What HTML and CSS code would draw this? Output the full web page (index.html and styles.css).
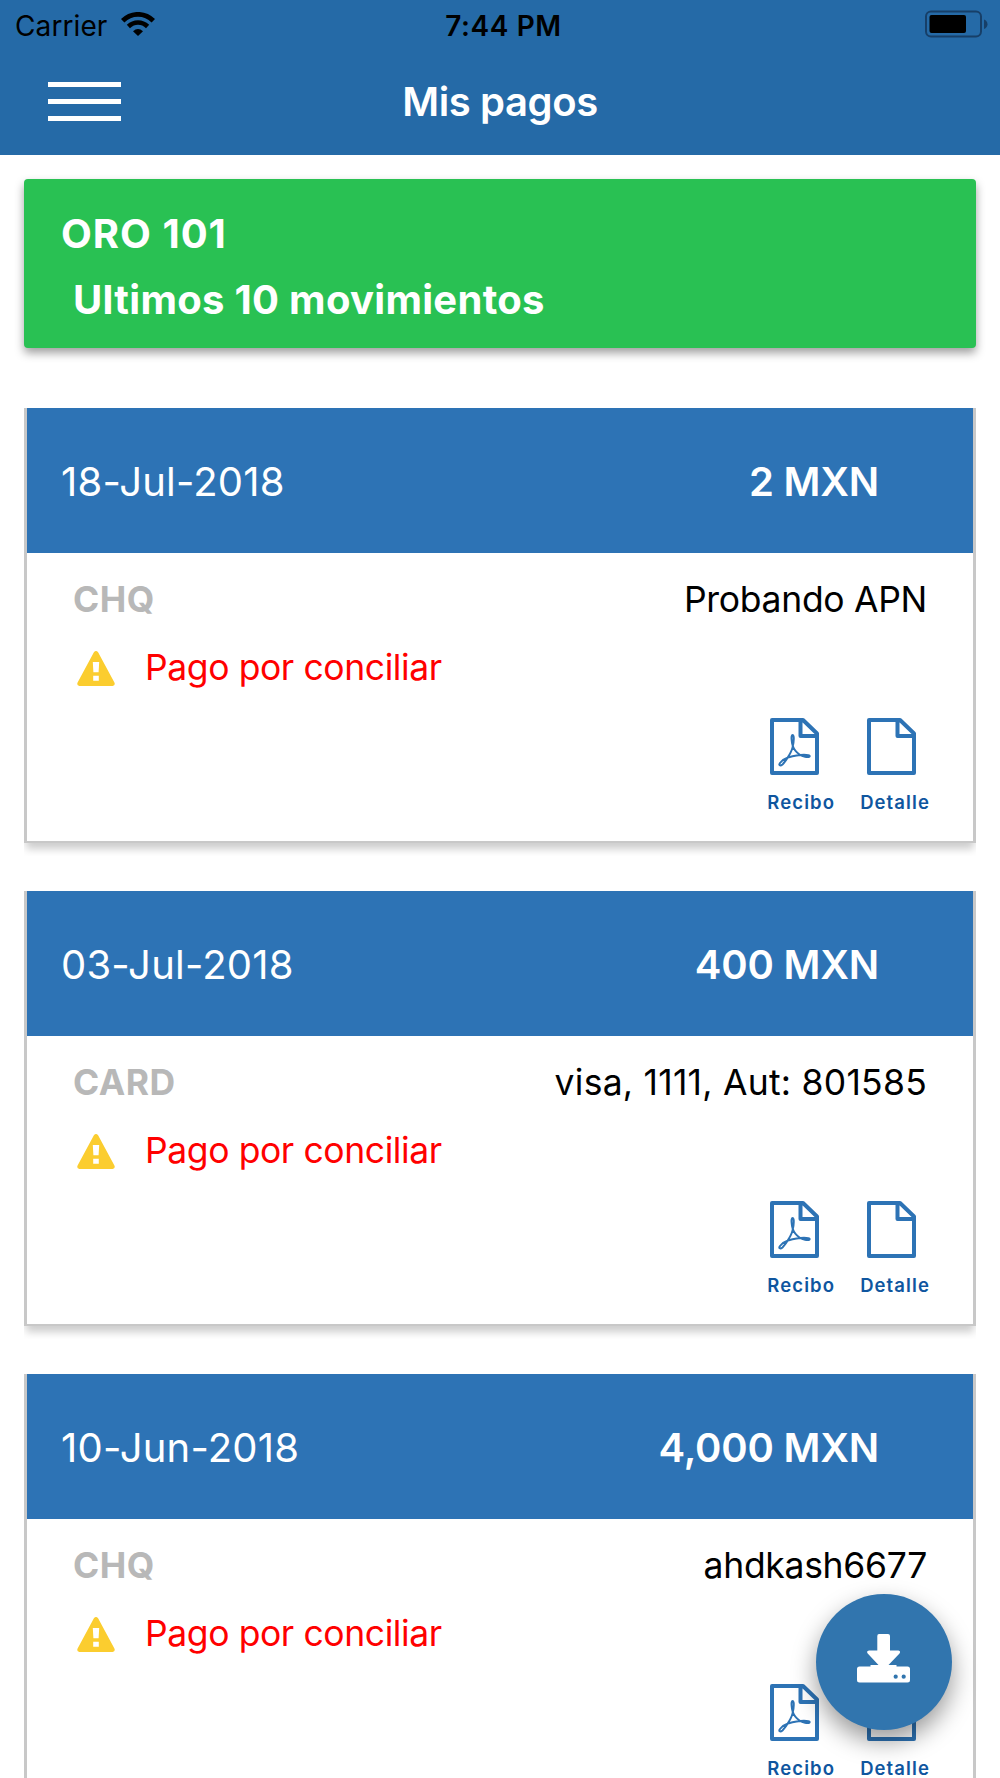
FILE: index.html
```html
<!DOCTYPE html>
<html lang="es">
<head>
  <meta charset="utf-8">
  <title>Mis pagos</title>
  <link rel="stylesheet" href="styles.css">
</head>
<body>
  <!-- shared icons -->
  <svg class="sprite">
    <symbol id="icon-file" viewBox="0 0 49 57">
      <path d="M2 2H33L47 15.5V55H2Z M30.5 2V18H47" fill="none" stroke="#2d73b5" stroke-width="4" stroke-linejoin="round"/>
    </symbol>
    <symbol id="icon-pdf" viewBox="0 0 49 57">
      <path d="M2 2H33L47 15.5V55H2Z M30.5 2V18H47" fill="none" stroke="#2d73b5" stroke-width="4" stroke-linejoin="round"/>
      <path d="M22.8 28C21.6 24 20.8 17 22.6 17C24.4 17 23.8 24 22.8 28C22.4 33 16 43 12.5 46.500C10 48.500 8.500 47 10 45C12 42.500 15 40.500 18 39.500C23 38 29 36.700 34 36.700C37 36.700 40.500 37.500 39.500 38.500C38 40 32.500 38.500 29.500 36.500C26.500 34.500 24 31.500 22.8 28Z" fill="none" stroke="#2d73b5" stroke-width="2" stroke-linejoin="round"/>
    </symbol>
    <symbol id="icon-warning" viewBox="0 0 38 35">
      <path fill="#fbcd2f" fill-rule="evenodd" d="M16.900 1.200Q19 -1.200 21.100 1.200L37.400 31.500Q38.600 34.600 35.600 35H2.400Q-.6 34.600 .6 31.500ZM15.800 11L16.400 21.300H21.600L22.200 11ZM16.200 24.700V29.800H21.800V24.700Z"/>
    </symbol>
  </svg>

  <header class="header">
    <div class="status-bar">
      <div class="carrier">
        <span>Carrier</span>
        <svg class="wifi" viewBox="0 0 34 24">
          <path d="M1.700 8.800C10.300 .2 23.700 .2 32.300 8.800" fill="none" stroke="#000" stroke-width="4.800"/>
          <path d="M7.400 14.500C13 9.200 21 9.200 26.600 14.500" fill="none" stroke="#000" stroke-width="4.600"/>
          <path d="M12 19.200Q17 14.800 22 19.200L17 24Z"/>
        </svg>
      </div>
      <span class="time">7:44 PM</span>
      <svg class="battery" viewBox="0 0 64 28">
        <rect x="1" y="1.600" width="55" height="25" rx="5" fill="none" stroke="#173f68" stroke-width="2"/>
        <rect x="4.500" y="5" width="36.500" height="18" rx="2"/>
        <path d="M59 9.500Q62.500 11 62.500 14.200T59 19Z" fill="#173f68"/>
      </svg>
    </div>
    <div class="nav-bar">
      <div class="menu"><i></i><i></i><i></i></div>
      <h1>Mis pagos</h1>
    </div>
  </header>

  <main>
    <section class="account">
      <p>ORO 101</p>
      <p class="subtitle">Ultimos 10 movimientos</p>
    </section>

    <article class="card">
      <div class="card-header">
        <span class="date">18-Jul-2018</span>
        <span class="amount">2 MXN</span>
      </div>
      <div class="row">
        <span class="type">CHQ</span>
        <span class="reference">Probando APN</span>
      </div>
      <div class="status">
        <svg><use href="#icon-warning"/></svg>
        <span>Pago por conciliar</span>
      </div>
      <div class="actions">
        <a class="recibo"><svg><use href="#icon-pdf"/></svg><span>Recibo</span></a>
        <a class="detalle"><svg><use href="#icon-file"/></svg><span>Detalle</span></a>
      </div>
    </article>

    <article class="card">
      <div class="card-header">
        <span class="date">03-Jul-2018</span>
        <span class="amount">400 MXN</span>
      </div>
      <div class="row">
        <span class="type">CARD</span>
        <span class="reference card-number">visa, 1111, Aut: 801585</span>
      </div>
      <div class="status">
        <svg><use href="#icon-warning"/></svg>
        <span>Pago por conciliar</span>
      </div>
      <div class="actions">
        <a class="recibo"><svg><use href="#icon-pdf"/></svg><span>Recibo</span></a>
        <a class="detalle"><svg><use href="#icon-file"/></svg><span>Detalle</span></a>
      </div>
    </article>

    <article class="card">
      <div class="card-header">
        <span class="date">10-Jun-2018</span>
        <span class="amount">4,000 MXN</span>
      </div>
      <div class="row">
        <span class="type">CHQ</span>
        <span class="reference">ahdkash6677</span>
      </div>
      <div class="status">
        <svg><use href="#icon-warning"/></svg>
        <span>Pago por conciliar</span>
      </div>
      <div class="actions">
        <a class="recibo"><svg><use href="#icon-pdf"/></svg><span>Recibo</span></a>
        <a class="detalle"><svg><use href="#icon-file"/></svg><span>Detalle</span></a>
      </div>
    </article>
  </main>

  <!-- floating download button -->
  <div class="fab">
    <svg viewBox="0 0 53 49">
      <path fill="#fff" d="M22 0H31Q33 0 33 2V16.500H41.500Q44 17 42.500 19.500L31.500 31H39.500V32.500H50.500Q53 32.500 53 35V46Q53 48.500 50.500 48.500H2.500Q0 48.500 0 46V35Q0 32.500 2.500 32.500H13.500V31H21.500L10.700 19.500Q9 17 12 16.500H20.300V2Q20.300 0 22 0Z"/>
      <circle cx="38.700" cy="42.700" r="2.100" fill="#3175ae"/>
      <circle cx="46.700" cy="42.700" r="2.100" fill="#3175ae"/>
    </svg>
  </div>
</body>
</html>
```
FILE: styles.css
```css
* {
  box-sizing: border-box;
}

body {
  margin: 0;
  height: 1778px;
  overflow: hidden;
  background-color: #fff;
  font-family: Inter, "Liberation Sans", sans-serif;
}

.sprite {
  display: none;
}

svg {
  display: block;
}

.header {
  height: 155px;
  background-color: #256aa7;
}

.status-bar {
  display: grid;
  grid-template-columns: 1fr auto 1fr;
  height: 50px;
  padding: 0 11px 0 15px;
  line-height: 53px;
  font-size: 28px;
}

.carrier {
  display: flex;
  gap: 14px;
  letter-spacing: 0.1px;
}

.wifi {
  width: 34px;
  height: 24px;
  margin-top: 12px;
}

.time {
  padding-left: 3px;
  font-weight: 600;
  letter-spacing: 0.6px;
}

.battery {
  justify-self: end;
  width: 64px;
  height: 28px;
  margin-top: 10px;
}

.nav-bar {
  display: grid;
  grid-template-columns: 1fr auto 1fr;
  padding: 0 48px;
}

.menu {
  display: flex;
  flex-direction: column;
  gap: 12px;
  padding-top: 32px;
}

.menu i {
  width: 73px;
  height: 5px;
  background-color: #fff;
}

h1 {
  margin: 0;
  color: #fff;
  font-size: 40px;
  font-weight: 600;
  letter-spacing: -0.4px;
  line-height: 103px;
}

main {
  padding: 24px 24px 0;
}

.account {
  height: 169px;
  padding: 22px 37px;
  border-radius: 4px;
  background-color: #29c153;
  box-shadow: 0 5px 10px rgba(0, 0, 0, 0.38);
  color: #fff;
  font-size: 40px;
  font-weight: 700;
  letter-spacing: 1px;
}

.account p {
  margin: 0;
  line-height: 66px;
}

.account .subtitle {
  padding-left: 12px;
  letter-spacing: 0.3px;
}

.card {
  height: 435px;
  margin: 60px 0 48px;
  border: solid #c8c8c8;
  border-width: 0 3px 2px;
  box-shadow: 0 8px 8px -2px rgba(0, 0, 0, 0.2);
  clip-path: inset(0 0 -13px 0);
}

.card + .card {
  margin-top: 0;
}

.card-header {
  display: flex;
  justify-content: space-between;
  height: 145px;
  padding: 0 94px 0 34px;
  background-color: #2d73b5;
  color: #fff;
  font-size: 40px;
  line-height: 147px;
}

.date {
  letter-spacing: 0.2px;
}

.amount {
  font-weight: 600;
  letter-spacing: -0.2px;
}

.row {
  display: flex;
  justify-content: space-between;
  padding: 13px 46px 0 46px;
  font-size: 35.500px;
  line-height: 68px;
}

.type {
  color: #b8b8b8;
  font-weight: 700;
  letter-spacing: 0.5px;
}

.reference {
  letter-spacing: -0.3px;
}

.card-number {
  letter-spacing: 0.25px;
}

.status {
  display: flex;
  align-items: center;
  gap: 30px;
  height: 67px;
  padding-left: 50px;
  color: #f00;
  font-size: 35.500px;
  letter-spacing: -0.4px;
}

.status svg {
  width: 38px;
  height: 35px;
  margin-top: 1px;
}

.actions {
  display: flex;
  justify-content: flex-end;
  gap: 25px;
  padding: 17px 43px 0 0;
  color: #0f569f;
  font-size: 18.500px;
  font-weight: 600;
  letter-spacing: 1.1px;
  line-height: 20px;
}

.actions svg {
  width: 49px;
  height: 57px;
  margin-bottom: 17px;
}

.recibo svg {
  margin-left: 3px;
}

.detalle svg {
  margin-left: 7px;
}

.fab {
  position: fixed;
  left: 816px;
  top: 1594px;
  display: flex;
  align-items: center;
  justify-content: center;
  width: 136px;
  height: 136px;
  padding: 0 1px 8px 0;
  border-radius: 50%;
  background-color: #3175ae;
  box-shadow: 0 11px 24px rgba(0, 0, 0, 0.4);
}

.fab svg {
  width: 53px;
  height: 49px;
}
```
